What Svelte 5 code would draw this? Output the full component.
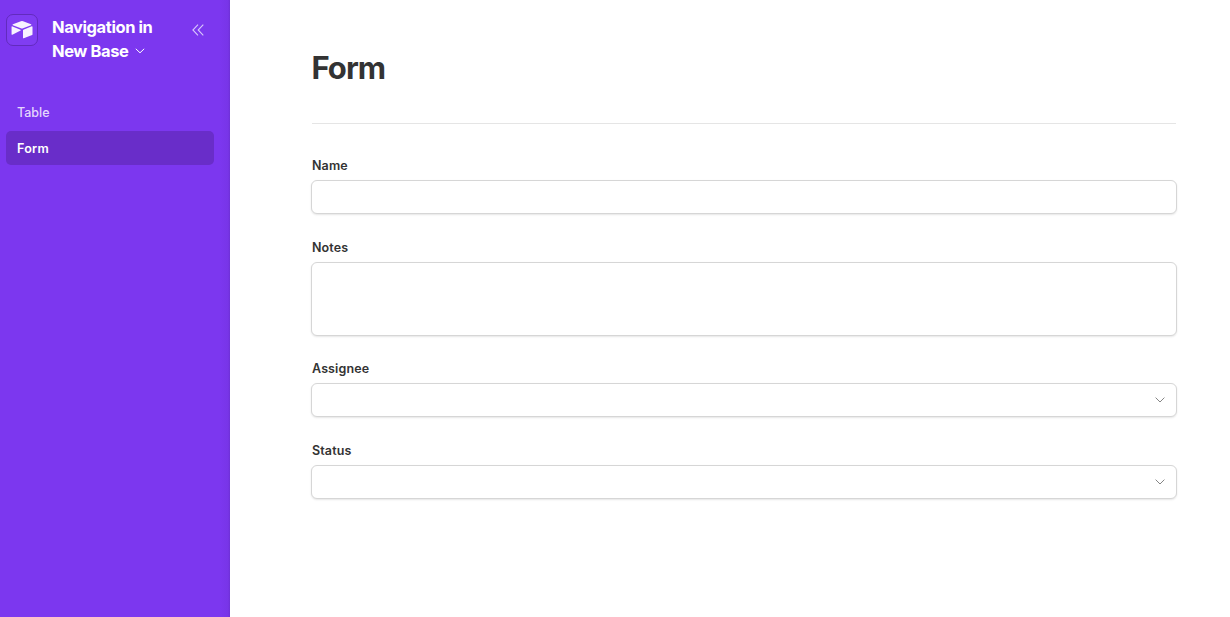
<script>
  let pages = $state(['Table', 'Form']);
  let active = $state('Form');
  const fields = [
    { id: 'name', label: 'Name', type: 'text' },
    { id: 'notes', label: 'Notes', type: 'long' },
    { id: 'assignee', label: 'Assignee', type: 'select' },
    { id: 'status', label: 'Status', type: 'select' }
  ];
</script>

<div class="app">
  <aside class="sidebar">
    <div class="side-hd">
      <span class="logo">
        <svg width="22" height="20" viewBox="0 0 22 20" fill="#f8f3ff"><path d="M9.9 1.25 1.9 4.2c-.45.18-.44.75.02.95l7.95 3.1c.7.28 1.48.28 2.18 0l7.96-3.1c.45-.18.45-.78.01-.95L12.1 1.25a3.2 3.2 0 0 0-2.2 0Z"/><path d="M12 10.2v7.6c0 .38.37.63.72.5l8.4-3.35c.23-.1.38-.3.38-.53V6.8c0-.37-.37-.62-.72-.49l-8.42 3.35a.58.58 0 0 0-.36.54Z"/><path d="m9.65 10.6-8.3 4.05c-.35.17-.8-.07-.8-.47V6.9c0-.15.08-.27.18-.37.22-.19.46-.2.7-.11l8.1 3.25c.43.18.47.72.12.93Z"/></svg>
      </span>
      <h1>Navigation in<br />New Base
        <svg class="title-chev" width="10" height="6" viewBox="0 0 10 6" fill="none" stroke="currentColor"><path d="M.8.8 5 4.8 9.2.8"/></svg>
      </h1>
      <button class="collapse" aria-label="Collapse sidebar">
        <svg width="12" height="12" viewBox="0 0 12 12" fill="none" stroke="currentColor" stroke-width="1.1"><path d="M6 .7.9 6 6 11.3M11.3.7 6.2 6l5.1 5.3"/></svg>
      </button>
    </div>

    <nav>
      {#each pages as page}
        <button class="nav-item" class:active={page === active} onclick={() => (active = page)}>{page}</button>
      {/each}
    </nav>
  </aside>

  <main>
    <h2>Form</h2>
    <form>
      {#each fields as field}
        <div class="field">
          <label for={field.id}>{field.label}</label>
          {#if field.type === 'text'}
            <input class="box" id={field.id} type="text" />
          {:else if field.type === 'long'}
            <textarea class="box long" id={field.id}></textarea>
          {:else}
            <button class="box select" id={field.id} type="button">
              <svg width="10" height="6" viewBox="0 0 10 6" fill="none" stroke="currentColor"><path d="M.6.6 5 5 9.4.6"/></svg>
            </button>
          {/if}
        </div>
      {/each}
    </form>
  </main>
</div>

<style>
  :global(body) { background: #fff; overflow: hidden; }
  .app { display: flex; height: 100vh; font-family: Inter, "Liberation Sans", sans-serif; color: #333; }
  button { font: inherit; color: inherit; border: 0; background: transparent; padding: 0; cursor: pointer; }
  svg { display: block; }

  /* SIDEBAR */
  .sidebar { width: 230px; flex: none; box-sizing: border-box; background: linear-gradient(to left, #6e30d6, #7835e8 2px, #7c37ef 10px); color: #fff; }
  .side-hd { display: flex; align-items: flex-start; height: 95px; box-sizing: border-box; padding: 14px 26.5px 0 6px; }
  .logo { width: 32px; height: 32px; box-sizing: border-box; flex: none; display: grid; place-items: center; border: 1px solid #622bbd; border-radius: 7px; background: #803df2; }
  .side-hd h1 { flex: 1; margin: 1px 0 0 14px; font-size: 16.5px; line-height: 24px; font-weight: 650; letter-spacing: -0.025em; white-space: nowrap; }
  .title-chev { display: inline-block; vertical-align: 3px; margin-left: 3px; }
  .collapse { margin-top: 10px; color: #d9c6fb; }

  nav { display: flex; flex-direction: column; gap: 2px; padding: 0 16px 0 6px; }
  .nav-item { height: 34px; padding: 0 11px; border-radius: 5px; text-align: left; font-size: 12.5px; font-weight: 500; color: #e4d6fd; }
  .nav-item.active { background: #692dc9; color: #fff; font-weight: 600; letter-spacing: .02em; }

  /* FORM */
  main { flex: 1; padding: 48px 53px 0 81px; }
  h2 { margin: 0 1px; height: 75px; border-bottom: 1px solid #e5e5e5; font-size: 31px; line-height: 40px; font-weight: 700; letter-spacing: -0.03em; text-indent: -.5px; }
  form { display: flex; flex-direction: column; gap: 24px; padding-top: 32px; }
  .field { display: flex; flex-direction: column; }
  label { height: 24px; padding-left: 1px; font-size: 12.5px; line-height: 20px; font-weight: 600; letter-spacing: .01em; }
  .box { width: 100%; height: 34px; box-sizing: border-box; border: 1px solid #d6d6d6; border-radius: 6px; background: #fff; box-shadow: 0 1px 2px rgba(0, 0, 0, .1); padding: 0 11px; font: inherit; font-size: 13px; outline: none; }
  .long { height: 74px; padding: 8px 11px; resize: none; margin-bottom: -1px; }
  .select { display: flex; align-items: center; justify-content: flex-end; color: #858585; }
</style>
